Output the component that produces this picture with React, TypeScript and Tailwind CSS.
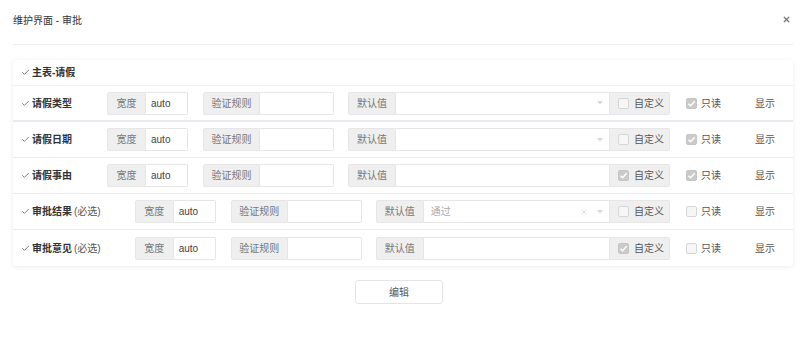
import { Check, X } from "lucide-react";

type Row = {
  label: string;
  required?: boolean;
  select?: boolean;
  value?: string;
  custom: boolean;
  readonly: boolean;
};

const rows: Row[] = [
  { label: "请假类型", select: true, custom: false, readonly: true },
  { label: "请假日期", select: true, custom: false, readonly: true },
  { label: "请假事由", custom: true, readonly: true },
  { label: "审批结果", required: true, select: true, value: "通过", custom: false, readonly: false },
  { label: "审批意见", required: true, custom: true, readonly: false },
];

function Box({ checked }: { checked: boolean }) {
  return checked ? (
    <span className="w-[11px] h-[11px] rounded-[2px] bg-[#cacaca] border border-[#c6c6c6] flex items-center justify-center">
      <svg width="9" height="9" viewBox="0 0 8 8">
        <path d="M1.3 4.2 L3.2 6 L6.8 2" fill="none" stroke="#fff" strokeWidth="1.3" />
      </svg>
    </span>
  ) : (
    <span className="w-[11px] h-[11px] rounded-[2px] bg-[#f6f6f6] border border-[#d6d6d6]" />
  );
}

function Caret() {
  return (
    <svg width="6" height="4" viewBox="0 0 6 4" className="ml-[9px]">
      <path d="M0 0 L6 0 L3 3.5 Z" fill="#d8d8d8" />
    </svg>
  );
}

export default function App() {
  return (
    <div
      className="w-[806px] h-[337px] bg-white text-[10px] text-[#333]"
      style={{ fontFamily: '"Liberation Sans", "Noto Sans CJK SC", sans-serif' }}
    >
      {/* Header */}
      <div className="mx-[13px] h-[45px] border-b border-[#eeeeee] flex items-start justify-between pt-[14px]">
        <span className="leading-[14px] text-[#333]">维护界面 - 审批</span>
        <X className="w-[9px] h-[9px] text-[#777] mt-[1px] mr-[2px]" strokeWidth={3.5} />
      </div>

      {/* Card */}
      <div className="mx-[13px] mt-[15px] bg-white rounded-[3px] shadow-[0_1px_5px_rgba(0,0,0,0.08)]">
        <div className="h-[26px] flex items-center px-[8px] border-b border-[#eef0f3] font-bold">
          <Check className="w-[9px] h-[9px] mr-[2px] text-[#555]" strokeWidth={2} />
          主表-请假
        </div>
        {rows.map((r, i) => (
          <div
            key={i}
            className={`h-[36px] flex items-center pl-[8px] pr-[18px] ${i < rows.length - 1 ? (i === 0 ? "border-b-2 border-[#e9ebf0]" : "border-b border-[#e9ebf0]") : ""}`}
          >
            <Check className="w-[9px] h-[9px] mr-[2px] text-[#555]" strokeWidth={2} />
            <span className="font-bold">{r.label}</span>
            {r.required && <span className="ml-[2px] text-[#555]">(必选)</span>}

            {/* width */}
            <div className={`${r.required ? "ml-[34px]" : "ml-[35px]"} flex h-[23px]`}>
              <span className="w-[39px] bg-[#efefef] border border-[#e6e6e6] rounded-l-[2px] flex items-center justify-center text-[#777]">宽度</span>
              <span className="w-[42px] border border-l-0 border-[#e6e6e6] rounded-r-[2px] flex items-center pl-[5px] text-[#444]">auto</span>
            </div>

            {/* validation */}
            <div className="ml-[15px] flex h-[23px]">
              <span className="w-[57px] bg-[#efefef] border border-[#e6e6e6] rounded-l-[2px] flex items-center justify-center text-[#777]">验证规则</span>
              <span className="w-[74px] border border-l-0 border-[#e6e6e6] rounded-r-[2px]" />
            </div>

            {/* default */}
            <div className="ml-[14px] flex-1 flex h-[23px]">
              <span className="w-[48px] bg-[#efefef] border border-[#e6e6e6] rounded-l-[2px] flex items-center justify-center text-[#777]">默认值</span>
              <span className="flex-1 border border-l-0 border-[#e6e6e6] flex items-center pl-[7px] pr-[6px]">
                <span className="flex-1 text-[#aaa]">{r.value}</span>
                {r.value && <X className="w-[8px] h-[8px] text-[#ccc]" strokeWidth={2} />}
                {r.select && <Caret />}
              </span>
              <span className="w-[60px] bg-[#efefef] border border-l-0 border-[#e6e6e6] rounded-r-[2px] flex items-center pl-[8px] gap-[5px] text-[#555]">
                <Box checked={r.custom} />
                自定义
              </span>
            </div>

            {/* readonly */}
            <div className="ml-[16px] w-[69px] flex items-center gap-[4px] text-[#555]">
              <Box checked={r.readonly} />
              只读
            </div>
            <span className="text-[#555]">显示</span>
          </div>
        ))}
      </div>

      <div className="flex justify-center mt-[14px]">
        <button className="w-[88px] h-[24px] ml-[-8px] border border-[#e4e4ea] rounded-[3px] bg-white text-[#555] text-[10px]">
          编辑
        </button>
      </div>
    </div>
  );
}
